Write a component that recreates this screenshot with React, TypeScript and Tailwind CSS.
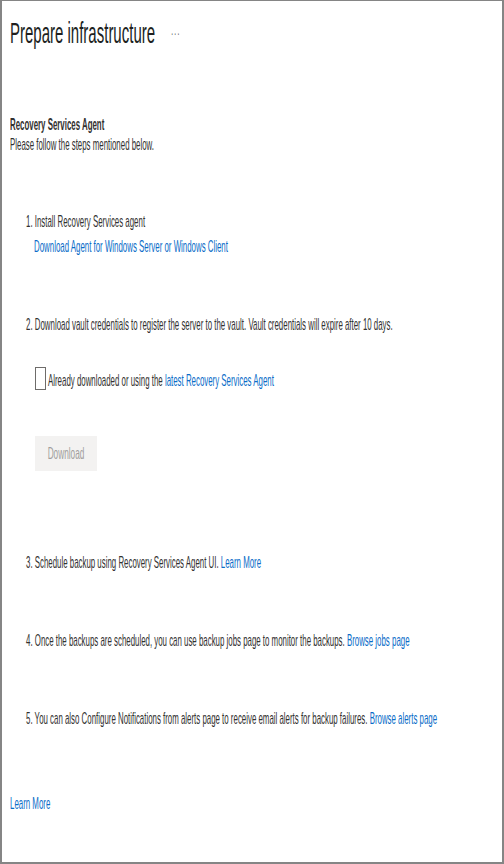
const font = { fontFamily: '"Segoe UI", "Liberation Sans", Arial, sans-serif' };

const steps = [
  { n: 1, text: "Install Recovery Services agent" },
  { n: 2, text: "Download vault credentials to register the server to the vault. Vault credentials will expire after 10 days." },
  { n: 3, text: "Schedule backup using Recovery Services Agent UI.", link: "Learn More" },
  { n: 4, text: "Once the backups are scheduled, you can use backup jobs page to monitor the backups.", link: "Browse jobs page" },
  { n: 5, text: "You can also Configure Notifications from alerts page to receive email alerts for backup failures.", link: "Browse alerts page" },
];

function Link({ children }: { children: React.ReactNode }) {
  return <a className="text-[#0a6cc8] cursor-pointer">{children}</a>;
}

function Step({ n, text, link }: { n: number; text: string; link?: string }) {
  return (
    <div className="pl-8 text-[15.75px] leading-5">
      {n}. {text}
      {link && (
        <>
          {" "}
          <Link>{link}</Link>
        </>
      )}
    </div>
  );
}

export default function App() {
  return (
    <div className="w-[504px] h-[864px] overflow-hidden bg-white border-[#858585] border-t border-l-2 border-r-2 border-b-2">
      {/* the shot is squeezed sideways, so the whole panel is drawn at double width and halved */}
      <div className="w-[1000px] origin-top-left scale-x-50 text-[#323130] pl-4" style={font}>
        <div className="mt-3 flex items-center">
          <h1 className="text-[30px] leading-10 font-normal text-[#201f1e]">Prepare infrastructure</h1>
          <span className="ml-8 text-[14px] text-[#605e5c] tracking-widest">···</span>
        </div>

        <div className="mt-[62px] text-[15.75px] leading-5 font-semibold">Recovery Services Agent</div>
        <div className="text-[15.75px] leading-5">Please follow the steps mentioned below.</div>

        <div className="mt-[57px]">
          <Step {...steps[0]} />
          <div className="pl-12 mt-[5px] text-[15.75px] leading-5">
            <Link>Download Agent for Windows Server or Windows Client</Link>
          </div>
        </div>

        <div className="mt-[58px]">
          <Step {...steps[1]} />
          <div className="pl-[50px] mt-8 flex items-start">
            <span className="w-[22px] h-[23px] border-x-2 border-y border-[#6e6c6a] bg-white shrink-0" />
            <span className="ml-1 mt-1 text-[15.75px] leading-5">
              Already downloaded or using the <Link>latest Recovery Services Agent</Link>
            </span>
          </div>
          <div className="pl-[50px] mt-[45px]">
            <button className="w-[124px] h-[35px] bg-[#f3f2f1] text-[#a19f9d] text-[16.5px]" disabled>
              Download
            </button>
          </div>
        </div>

        <div className="mt-[82px]">
          <Step {...steps[2]} />
        </div>
        <div className="mt-[58px]">
          <Step {...steps[3]} />
        </div>
        <div className="mt-[58px]">
          <Step {...steps[4]} />
        </div>

        <div className="mt-[65px] text-[15.75px] leading-5">
          <Link>Learn More</Link>
        </div>
      </div>
    </div>
  );
}
